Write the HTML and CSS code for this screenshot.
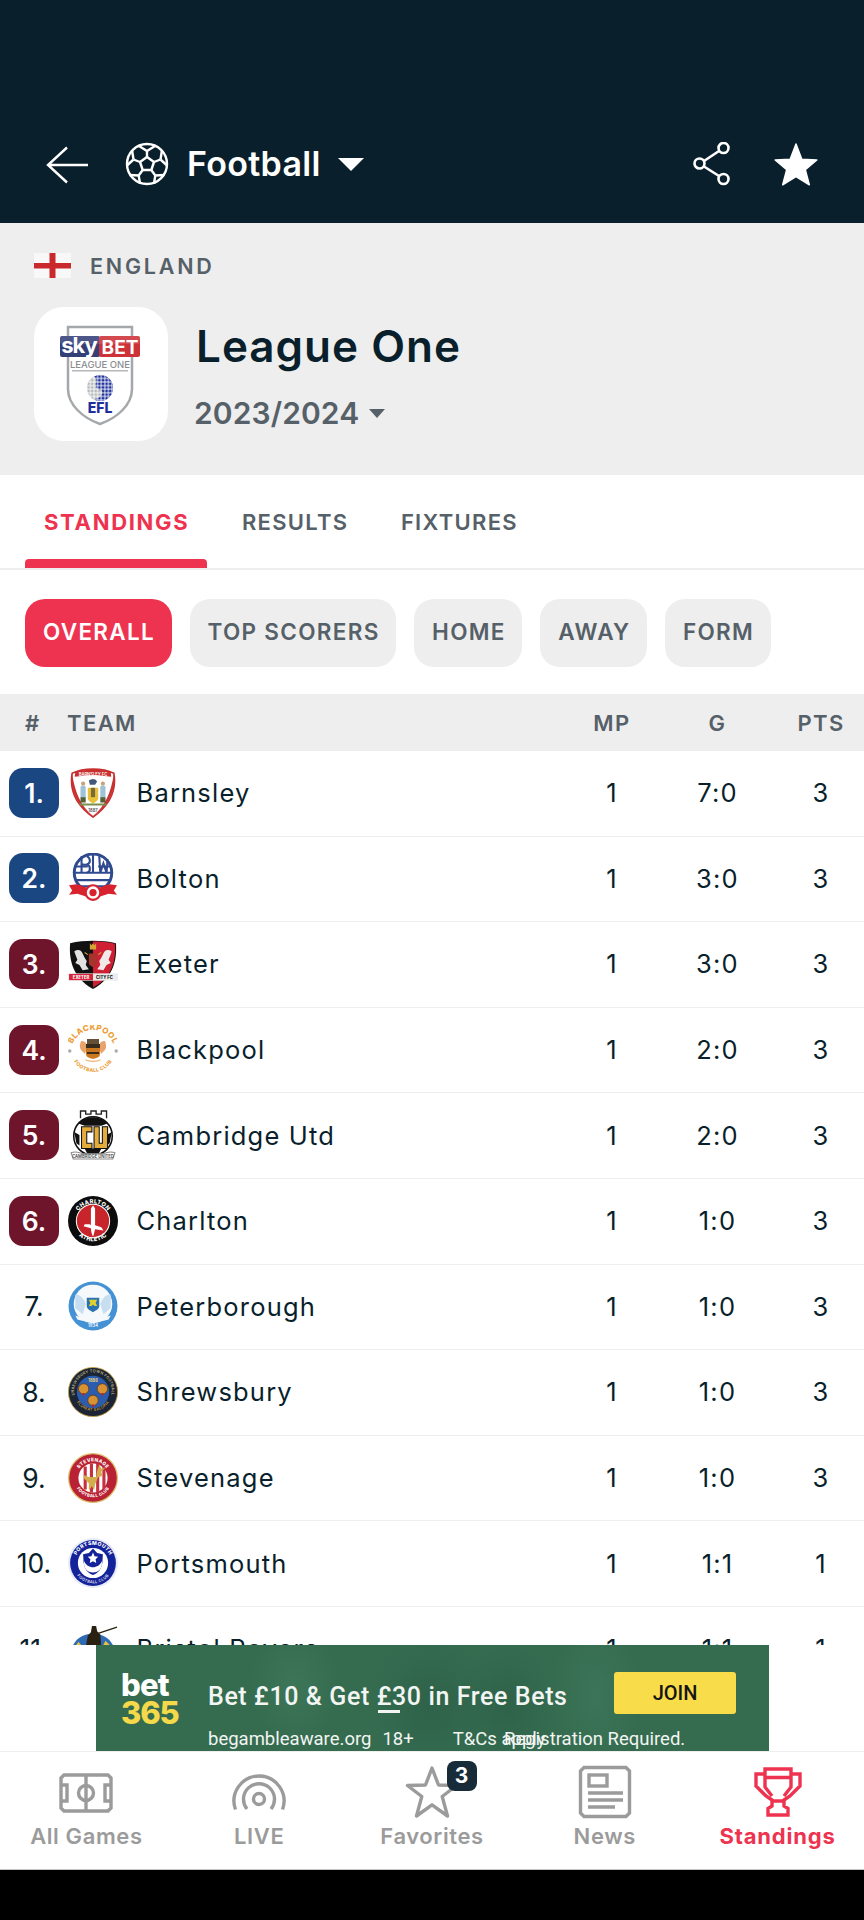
FILE: index.html
```html
<!DOCTYPE html>
<html lang="en">
<head>
<meta charset="utf-8">
<title>League One</title>
<link rel="stylesheet" href="styles.css">
</head>
<body>
<div class="app">
  <header class="topbar">
    <svg class="ico-back" viewBox="0 0 42 38"><path d="M21 1.500 2 19l19 17.500M2 19h40" fill="none" stroke="#fff" stroke-width="2.400"/></svg>
    <svg class="ico-ball" viewBox="0 0 44 44" fill="none" stroke="#fff" stroke-width="2.400" stroke-linejoin="round"><circle cx="22" cy="22" r="20"/><path d="M22 15l7 5-2.700 8h-8.600L15 20z"/><path d="M22 15V9M29 20l6.500-2.500M26.300 28l4 5.500M17.700 28l-4 5.500M15 20l-6.500-2.500"/><path d="M14 4l8 5 8-5M35.500 17.500l1.500-9.500M35.500 17.500l6 5.500M8.500 17.500 7 8M8.500 17.500l-6 5.500M30.300 33.500l9-.5M30.300 33.500 29 41.500M13.700 33.500l-9-.5M13.700 33.500 15 41.500"/></svg>
    <span class="sport">Football</span>
    <span class="caret caret-lg"></span>
    <span class="grow"></span>
    <svg class="ico-share" viewBox="0 0 38 44" fill="none" stroke="#fff" stroke-width="2.600"><circle cx="6.500" cy="21.500" r="5"/><circle cx="30.500" cy="6" r="5"/><circle cx="30.500" cy="37" r="5"/><path d="M11 19 26 9M11 24.500 26 34"/></svg>
    <svg class="ico-star" viewBox="0 0 44 44"><path d="M22 2l5.800 15.200 15 .8-11.500 9.800 4 15L22 34.500 8.700 42.800l4-15L1.200 18l15-.8z" fill="#fff" stroke="#fff" stroke-width="1.500" stroke-linejoin="round"/></svg>
  </header>

  <section class="league">
    <div class="country">
      <svg class="flag" viewBox="0 0 37 25"><rect width="37" height="25" fill="#f8f8f8"/><rect x="15.500" width="6" height="25" fill="#c9282d"/><rect y="10" width="37" height="5.500" fill="#c9282d"/></svg>
      <span>ENGLAND</span>
    </div>
    <div class="league-main">
      <div class="league-logo">
        <svg viewBox="0 0 120 125">
          <defs><pattern id="dots" width="3.600" height="3.600" patternUnits="userSpaceOnUse"><path d="M0 0h3.600v3.600H0z" fill="none" stroke="#fff" stroke-width=".9"/></pattern></defs>
          <path d="M28 17h64v62c0 16-15 29-32 35-17-6-32-19-32-35z" fill="#fff" stroke="#a5a8ab" stroke-width="2.500"/>
          <rect x="20" y="26" width="40" height="21" rx="2" fill="#343f78"/>
          <rect x="59" y="26" width="41" height="21" rx="2" fill="#cc3238"/>
          <rect x="20" y="26" width="80" height="8" rx="2" fill="#fff" opacity=".12"/>
          <text x="39" y="43" class="l-sky">sky</text>
          <text x="80" y="43.500" class="l-bet">BET</text>
          <text x="60" y="58" class="l-one">LEAGUE ONE</text>
          <rect x="32" y="60" width="56" height="1.500" fill="#b5b7b9"/>
          <circle cx="60" cy="78" r="13" fill="#b5b7b9"/>
          <path d="M54 66.500a13 13 0 1 1 0 23c6-1 9-5 8-9-5-1-7-3-6-8 1-2.500 0-4.500-2-6z" fill="#1d2f9b"/>
          <circle cx="60" cy="78" r="13" fill="url(#dots)"/>
          <text x="60" y="103" class="l-efl">EFL</text>
        </svg>
      </div>
      <div class="league-text">
        <h1>League One</h1>
        <div class="season"><span>2023/2024</span><span class="caret caret-sm"></span></div>
      </div>
    </div>
  </section>

  <nav class="tabs">
    <div class="tab tab-on">STANDINGS</div>
    <div class="tab">RESULTS</div>
    <div class="tab">FIXTURES</div>
  </nav>

  <div class="chips">
    <span class="chip chip-on">OVERALL</span>
    <span class="chip">TOP SCORERS</span>
    <span class="chip">HOME</span>
    <span class="chip">AWAY</span>
    <span class="chip">FORM</span>
  </div>

  <div class="thead">
    <span class="th-rank">#</span>
    <span class="th-team">TEAM</span>
    <span class="c-mp">MP</span>
    <span class="c-g">G</span>
    <span class="c-pts">PTS</span>
  </div>

  <main class="tbody">
    <div class="row">
      <span class="rank rank-blue">1.</span>
      <svg class="crest" viewBox="0 0 48 48"><path d="M24 1c7 0 14 1 20 4 2 12 0 28-20 42C4 33 2 17 4 5c6-3 13-4 20-4z" fill="#fff" stroke="#c92f2f" stroke-width="1.600"/><path d="M4 6c3 18 8 30 20 40C9 37 3 22 3 8z" fill="#c92f2f"/><path d="M44 6c-3 18-8 30-20 40 15-9 21-24 21-38z" fill="#c92f2f"/><path d="M7 3.500c11-2.500 23-2.500 34 0l.5 5c-11-2-24-2-35 0z" fill="#c92f2f"/><text x="24" y="7.500" class="t-crest" fill="#fff">BARNSLEY FC</text><path d="M20 12c3-2 6-2 8 1l-2 3h-5z" fill="#46587a"/><path d="M19 19h10v10c0 2-2 3.500-5 5-3-1.500-5-3-5-5z" fill="#e8c23b"/><path d="M22 19h4v9h-4z" fill="#7a6a3a"/><rect x="12" y="17" width="5" height="12" rx="1.500" fill="#9fc2d8"/><rect x="31" y="17" width="5" height="12" rx="1.500" fill="#9fc2d8"/><circle cx="14.500" cy="15" r="2" fill="#c9a27d"/><circle cx="33.500" cy="15" r="2" fill="#c9a27d"/><path d="M12 28h5v5h-5zM31 28h5v5h-5z" fill="#54603a"/><path d="M10 34h28l-2 2H12z" fill="#7b8f4c"/><text x="24" y="42" class="t-crest" fill="#555">1887</text></svg>
      <span class="team">Barnsley</span>
      <span class="c-mp">1</span><span class="c-g">7:0</span><span class="c-pts">3</span>
    </div>
    <div class="row">
      <span class="rank rank-blue">2.</span>
      <svg class="crest" viewBox="0 0 48 48"><circle cx="24" cy="19" r="18" fill="none" stroke="#2f4a8f" stroke-width="2.800"/><path d="M6 19h36M8 26h32M12 32h24" stroke="#2f4a8f" stroke-width="2" fill="none"/><path d="M7 13h12M29 13h12" stroke="#2f4a8f" stroke-width="1.800"/><path d="M13 3v16M18 3c4 2 4 7 0 8-4 1-5-1-5 0M18 11c4 1 4 7 0 8M24 1v18M30 3l1 16 3-9 3 9 1-13" stroke="#2f4a8f" stroke-width="2" fill="none"/><path d="M1 31l7-1c6 1 12 5 16 6 4-1 10-5 16-6l7 1-3 5 3 4-8-1-15 5-15-5-8 1 3-4z" fill="#d8232f"/><circle cx="24" cy="38" r="7" fill="#fff" stroke="#d8232f" stroke-width="2"/><circle cx="24" cy="38" r="3.500" fill="#d8232f"/></svg>
      <span class="team">Bolton</span>
      <span class="c-mp">1</span><span class="c-g">3:0</span><span class="c-pts">3</span>
    </div>
    <div class="row">
      <span class="rank rank-red">3.</span>
      <svg class="crest" viewBox="0 0 48 48"><path d="M2 4c14-3 30-3 44 0 1 14-1 32-22 44C3 36 1 18 2 4z" fill="#111"/><path d="M24 2.500c7 0 14 .5 21 2 1 14-1 31-21 42z" fill="#cf1f35"/><path d="M6 12c4-3 7-1 8 2l2 4 2 3-1 4 3 4-6 1-3-5-4-2 2-3z" fill="#e2e2e2"/><path d="M42 12c-4-3-7-1-8 2l-2 4-2 3 1 4-3 4 6 1 3-5 4-2-2-3z" fill="#f2e8e8"/><path d="M20 14h8v9c0 2-2 3-4 4-2-1-4-2-4-4z" fill="#a8332c"/><path d="M21 4l1.500 2L24 4l1.500 2L27 4v6h-6z" fill="#d4a530"/><path d="M16 13l3 2M32 13l-3 2" stroke="#d4a530"/><rect x="0" y="33" width="48" height="7" fill="#ececec"/><rect x="1" y="33.500" width="23" height="6" fill="#d72339"/><text x="12.500" y="38.500" class="t-crest t-bold" fill="#fff">EXETER</text><text x="35" y="38.500" class="t-crest t-bold" fill="#111">CITY FC</text></svg>
      <span class="team">Exeter</span>
      <span class="c-mp">1</span><span class="c-g">3:0</span><span class="c-pts">3</span>
    </div>
    <div class="row">
      <span class="rank rank-red">4.</span>
      <svg class="crest" viewBox="0 0 50 48"><defs><path id="bp-top" d="M3 26a22 22 0 0 1 44 0"/><path id="bp-bot" d="M3 24a22 22 0 0 0 44 0"/></defs><text class="t-ring t-bold" fill="#eda03a" font-size="8"><textPath href="#bp-top" startOffset="50%">BLACKPOOL</textPath></text><text class="t-ring t-bold" fill="#eda03a" font-size="5"><textPath href="#bp-bot" startOffset="50%">FOOTBALL CLUB</textPath></text><circle cx="1.800" cy="25" r="1.700" fill="#a9a9a9"/><circle cx="48.200" cy="25" r="1.700" fill="#a9a9a9"/><path d="M13 15c4 0 6 2 6 6l-2 7-4-4c-2-3-1-6 0-9zM37 15c-4 0-6 2-6 6l2 7 4-4c2-3 1-6 0-9z" fill="#e8a46a"/><path d="M19 13h12v5H19z" fill="#64513a"/><path d="M18 18h14v10c0 3-3 4-7 5-4-1-7-2-7-5z" fill="#c9781f"/><path d="M18 18h14v4H18zM19 26h12v2H19z" fill="#3a2c1c"/><path d="M17 33c5 2 11 2 16 0l-1 2c-5 1.500-9 1.500-14 0z" fill="#efc08a"/></svg>
      <span class="team">Blackpool</span>
      <span class="c-mp">1</span><span class="c-g">2:0</span><span class="c-pts">3</span>
    </div>
    <div class="row">
      <span class="rank rank-red">5.</span>
      <svg class="crest" viewBox="0 0 48 48"><path d="M12 8V1h5v3h5V1h5v3h5V1h5v7" fill="#fff" stroke="#222" stroke-width="1.300"/><circle cx="24" cy="25" r="18.500" fill="#fff" stroke="#111" stroke-width="1.500"/><path d="M24 7c6 0 11 2 14 6l-6 2H16l-6-2c3-4 8-6 14-6zM6 21l5 3 0 10-3-2zM42 21l-5 3 0 10 3-2zM16 37h16l-3 6H19z" fill="#111"/><path d="M13 16h10v5h-5v11h5v5H13z" fill="#e4ac3b" stroke="#111"/><path d="M25 16h5v16h3V16h5v21H25z" fill="#e4ac3b" stroke="#111"/><path d="M3 41c6-2 8 1 13 1h16c5 0 7-3 13-1l-2 6H5z" fill="#fff" stroke="#8a8a8a"/><text x="24" y="46" class="t-crest" fill="#444" font-size="3">CAMBRIDGE UNITED</text></svg>
      <span class="team">Cambridge Utd</span>
      <span class="c-mp">1</span><span class="c-g">2:0</span><span class="c-pts">3</span>
    </div>
    <div class="row">
      <span class="rank rank-red">6.</span>
      <svg class="crest" viewBox="0 0 48 48"><defs><path id="ch-top" d="M7 24a17 17 0 0 1 34 0"/><path id="ch-bot" d="M4.500 24a19.500 19.500 0 0 0 39 0"/></defs><circle cx="24" cy="24" r="24" fill="#0c0c0c"/><circle cx="24" cy="24" r="16" fill="#c8242b" stroke="#fff" stroke-width="1"/><text class="t-ring t-bold" fill="#fff" font-size="5.500"><textPath href="#ch-top" startOffset="50%">CHARLTON</textPath></text><text class="t-ring t-bold" fill="#fff" font-size="5.500"><textPath href="#ch-bot" startOffset="50%">ATHLETIC</textPath></text><path d="M24 9l2 3 0 16 6 2 2 3-8-1c-1 3-1 5-2 7-1-2-2-5-2-8l-7-2 1-2h5l1 1V12z" fill="#fff"/></svg>
      <span class="team">Charlton</span>
      <span class="c-mp">1</span><span class="c-g">1:0</span><span class="c-pts">3</span>
    </div>
    <div class="row">
      <span class="rank">7.</span>
      <svg class="crest" viewBox="0 0 48 48"><circle cx="24" cy="24" r="23.500" fill="#4492d3"/><circle cx="24" cy="22" r="18.500" fill="#f5f9fc"/><path d="M7 13c4 0 8 3 10 9l-3 10-7-6zM41 13c-4 0-8 3-10 9l3 10 7-6z" fill="#c6deef"/><path d="M18 16h12v8c0 3-3 4-6 6-3-2-6-3-6-6z" fill="#2b74b3"/><path d="M20 18h8l-1.500 3 1.500 3h-2.500l-1.500-1.500-1.500 1.500H20l1.500-3z" fill="#e3d02f"/><path d="M7 33c10 4 24 4 34 0l-2 4c-9 3-21 3-30 0z" fill="#f5f9fc"/><text x="24" y="44.500" class="t-crest" fill="#fff">1934</text></svg>
      <span class="team">Peterborough</span>
      <span class="c-mp">1</span><span class="c-g">1:0</span><span class="c-pts">3</span>
    </div>
    <div class="row">
      <span class="rank">8.</span>
      <svg class="crest" viewBox="0 0 48 48"><defs><path id="sh-top" d="M9 33A18 18 0 1 1 39 33"/><path id="sh-bot" d="M7 31a18.500 18.500 0 0 0 34 0"/></defs><circle cx="24" cy="24" r="23.600" fill="#1b2535" stroke="#c9a13e" stroke-width=".8"/><circle cx="24" cy="24" r="15.500" fill="#2a5db0"/><text class="t-ring" fill="#d8c78d" font-size="3.600"><textPath href="#sh-top" startOffset="50%">SHREWSBURY TOWN FOOTBALL</textPath></text><text class="t-ring" fill="#d8a63a" font-size="3.600"><textPath href="#sh-bot" startOffset="50%">FLOREAT SALOPIA</textPath></text><g fill="#d69233" stroke="#6d3a12" stroke-width=".8"><circle cx="15" cy="21" r="5"/><circle cx="33" cy="21" r="5"/><circle cx="24" cy="32" r="5"/></g><path d="M14 25l1 4 1-4zM32 25l1 4 1-4zM23 36l1 4 1-4z" fill="#c5222a"/><text x="24" y="14" class="t-crest" fill="#f3d779">1886</text></svg>
      <span class="team">Shrewsbury</span>
      <span class="c-mp">1</span><span class="c-g">1:0</span><span class="c-pts">3</span>
    </div>
    <div class="row">
      <span class="rank">9.</span>
      <svg class="crest" viewBox="0 0 48 48"><defs><path id="st-top" d="M8 24a16 16 0 0 1 32 0"/><path id="st-bot" d="M5.500 24a18.500 18.500 0 0 0 37 0"/></defs><circle cx="24" cy="24" r="23.400" fill="#b92234" stroke="#dcc06a" stroke-width="1.200"/><circle cx="24" cy="24" r="14" fill="#fff"/><path d="M15 13h3v22h-3zM21 10h3v28h-3zM27 10h3v28h-3zM33 13h3v22h-3z" fill="#c6303f"/><text class="t-ring t-bold" fill="#fff" font-size="4.600"><textPath href="#st-top" startOffset="50%">STEVENAGE</textPath></text><text class="t-ring t-bold" fill="#fff" font-size="4"><textPath href="#st-bot" startOffset="50%">FOOTBALL CLUB</textPath></text><path d="M30 11l2 4 4-1-4 4 1 4-4 1-3 7-1 6-2-4-3 4 0-7-5-5 0-3 5 2h7l1-6z" fill="#d3ac4e"/></svg>
      <span class="team">Stevenage</span>
      <span class="c-mp">1</span><span class="c-g">1:0</span><span class="c-pts">3</span>
    </div>
    <div class="row">
      <span class="rank">10.</span>
      <svg class="crest" viewBox="0 0 48 48"><defs><path id="po-top" d="M6.500 24a17.500 17.500 0 0 1 35 0"/><path id="po-bot" d="M4.500 24a19.500 19.500 0 0 0 39 0"/></defs><circle cx="24" cy="24" r="24" fill="#e8ecf8"/><circle cx="24" cy="24" r="22" fill="#15239a"/><circle cx="24" cy="24" r="14.500" fill="#fff"/><text class="t-ring t-bold" fill="#fff" font-size="5"><textPath href="#po-top" startOffset="50%">PORTSMOUTH</textPath></text><text class="t-ring" fill="#fff" font-size="3.800"><textPath href="#po-bot" startOffset="50%">FOOTBALL CLUB</textPath></text><path d="M24 10l4 4.500 5.500 1-.5 8c-1 7-4 10-9 12-5-2-8-5-9-12l-.5-8 5.500-1z" fill="#15239a"/><path d="M15.500 22c3 8 14 8 17 0 1 7-3 11-8.500 11s-9.500-4-8.500-11z" fill="#fff"/><path d="M24 14l1.500 3.500 3.500.5-2.500 2.500.6 3.500-3.100-1.700-3.100 1.700.6-3.500L19 18l3.500-.5z" fill="#fff"/></svg>
      <span class="team">Portsmouth</span>
      <span class="c-mp">1</span><span class="c-g">1:1</span><span class="c-pts">1</span>
    </div>
    <div class="row">
      <span class="rank">11.</span>
      <svg class="crest" viewBox="0 0 48 48"><path d="M4 22C8 13 14 10 24 9c10 1 16 4 20 13v26H4z" fill="#2f6ab5"/><path d="M6 23l4-6 5 6-3 5zM36 16l6 6-3 5-6-5z" fill="#e6c23d"/><path d="M17 22l2-11 3-3 1-6h4l1 5 3 3 1 12z" fill="#2a2113"/><path d="M29 9 47 3" stroke="#2a2113" stroke-width="1.300"/></svg>
      <span class="team">Bristol Rovers</span>
      <span class="c-mp">1</span><span class="c-g">1:1</span><span class="c-pts">1</span>
    </div>
  </main>

  <aside class="ad-band">
    <div class="ad">
      <div class="ad-logo"><span class="ad-bet">bet</span><span class="ad-365">365</span></div>
      <div class="ad-copy">
        <div class="ad-head">Bet £10 &amp; Get <span class="ad-under">£30</span> in Free Bets</div>
        <div class="ad-foot"><span>begambleaware.org</span><span>18+</span><span class="ad-tc">T&amp;Cs apply</span><span class="ad-reg">Registration Required.</span></div>
      </div>
      <div class="ad-join">JOIN</div>
    </div>
  </aside>

  <footer class="bottomnav">
    <div class="nav-item">
      <svg class="nav-ico" viewBox="0 0 60 54" fill="none" stroke="#9b9b9b" stroke-width="3.400"><path d="M8 10h44l3 3v30l-3 3H8l-3-3V13z"/><path d="M30 10v36"/><circle cx="30" cy="28" r="7.500"/><path d="M5 20h6v16H5M55 20h-6v16h6"/></svg>
      <span>All Games</span>
    </div>
    <div class="nav-item">
      <svg class="nav-ico" viewBox="0 0 60 54" fill="none" stroke="#9b9b9b" stroke-width="3.400"><path d="M6.500 44.500A25 25 0 1 1 53.500 44.500M18 44a15.500 15.500 0 1 1 24 0"/><circle cx="30" cy="34" r="5.500"/></svg>
      <span>LIVE</span>
    </div>
    <div class="nav-item nav-fav">
      <svg class="nav-ico" viewBox="0 0 60 54" fill="none" stroke="#9b9b9b" stroke-width="3.400" stroke-linejoin="round"><path d="M30 3l6.500 17 18 .5-14.300 11 5.300 19.500L30 39.800 14.500 51l5.300-19.500-14.300-11 18-.5z"/></svg>
      <span class="nav-badge">3</span>
      <span>Favorites</span>
    </div>
    <div class="nav-item">
      <svg class="nav-ico" viewBox="0 0 60 54" fill="none" stroke="#9b9b9b" stroke-width="3.400"><path d="M9 2.500h42l3.500 3.500v42l-3.500 3.500H9L5.500 48V6z"/><rect x="14" y="10" width="18" height="11"/><path d="M13 28h35M13 35h35M13 42h27"/></svg>
      <span>News</span>
    </div>
    <div class="nav-item nav-on">
      <svg class="nav-ico" viewBox="0 0 60 54" fill="none" stroke="#ee3350" stroke-width="3.400"><path d="M17 4h26v5h9v12L42 31l-6 4v6l4 2.500V50H20v-6.500l4-2.500v-6l-6-4L8 21V9h9zM17 9v13l7 9M43 9v13l-7 9M17 12.500h26M24 36h12"/></svg>
      <span>Standings</span>
    </div>
  </footer>
  <div class="sysbar"></div>
</div>
</body>
</html>
```

FILE: styles.css
```css
* { box-sizing: border-box; }
html, body { margin: 0; padding: 0; background: #000; }
body { font-family: "Inter", "Liberation Sans", sans-serif; }
.app { width: 864px; height: 1920px; display: flex; flex-direction: column; overflow: hidden; background: #fff; }

/* top bar */
.topbar { flex: 0 0 223px; background: #0a1f2c; display: flex; align-items: flex-end; padding: 0 46px 37px 46px; color: #fff; }
.ico-back { width: 42px; height: 38px; margin-bottom: 2px; }
.ico-ball { width: 44px; height: 44px; margin-left: 37px; }
.sport { font-size: 34px; font-weight: 600; line-height: 44px; margin-left: 18px; letter-spacing: .3px; }
.caret { display: inline-block; width: 0; height: 0; border-style: solid; border-color: transparent; }
.caret-lg { border-width: 13px 13px 0 13px; border-top-color: #fff; margin: 0 0 15px 17px; }
.caret-sm { border-width: 9px 8.500px 0 8.500px; border-top-color: #566068; margin-left: 10px; }
.grow { flex: 1; }
.ico-share { width: 38px; height: 44px; }
.ico-star { width: 44px; height: 44px; margin: 0 0 0 43px; }

/* league header */
.league { flex: 0 0 252px; background: #eee; padding: 30px 34px 0; }
.country { display: flex; align-items: center; height: 25px; color: #566068; font-size: 21.500px; font-weight: 600; letter-spacing: 2.800px; }
.flag { width: 37px; height: 25px; margin-right: 19px; }
.league-main { display: flex; margin-top: 29px; }
.league-logo { width: 134px; height: 134px; border-radius: 30px; background: #fff; padding: 3px 6px; }
.league-logo svg { width: 120px; height: 125px; display: block; }
.l-sky { font: 700 22px "Inter", sans-serif; fill: #fff; text-anchor: middle; letter-spacing: -1px; }
.l-bet { font: 700 19px "Inter", sans-serif; fill: #fff; text-anchor: middle; }
.l-one { font: 500 9.500px "Inter", sans-serif; fill: #8b8d90; text-anchor: middle; }
.l-efl { font: 800 14px "Inter", sans-serif; fill: #1d2f9b; text-anchor: middle; }
.league-text { margin-left: 28px; display: flex; flex-direction: column; }
h1 { margin: 12px 0 0; font-size: 44px; line-height: 54px; font-weight: 600; color: #0a1f2c; letter-spacing: 1px; }
.season { display: flex; align-items: center; margin-top: 20px; margin-left: -2px; font-size: 30px; line-height: 40px; font-weight: 600; color: #566068; letter-spacing: .1px; }

/* tabs */
.tabs { flex: 0 0 95px; display: flex; padding: 0 0 0 25px; border-bottom: 2px solid #eee; }
.tab { font-size: 22px; font-weight: 600; letter-spacing: 1.300px; color: #566068; padding: 34px 17.500px 0 19px; margin-right: 16px; }
.tab-on { color: #ee3350; font-weight: 700; letter-spacing: 1.700px; position: relative; }
.tab-on::after { content: ""; position: absolute; left: 0; right: 0; bottom: 0; height: 9px; border-radius: 4px 4px 0 0; background: #ee3350; }

/* chips */
.chips { flex: 0 0 124px; display: flex; gap: 18px; padding: 29px 25px 0; align-items: flex-start; }
.chip { height: 68px; line-height: 66px; padding: 0 16.500px 0 18px; border-radius: 20px; background: #eee; color: #566068; font-size: 22.500px; font-weight: 600; letter-spacing: 1.300px; }
.chip-on { background: #ee3350; color: #fff; }

/* table */
.thead { flex: 0 0 57px; display: flex; align-items: center; background: #eee; color: #566068; font-size: 22px; font-weight: 600; letter-spacing: 1.400px; }
.th-rank { width: 67px; padding-left: 25px; }
.th-team { flex: 1; }
.c-mp { width: 106px; margin-left: 3px; text-align: center; }
.c-g { width: 105px; text-align: center; }
.c-pts { width: 86px; margin-left: 8px; text-align: center; }

.tbody { flex: 0 0 894px; overflow: hidden; }
.row { height: 85.600px; display: flex; align-items: center; border-bottom: 1.500px solid #eee; padding-bottom: 1px; color: #0a1f2c; font-size: 25.500px; letter-spacing: 1.200px; }
.rank { width: 50px; height: 50px; margin-left: 9px; border-radius: 14px; display: flex; align-items: center; justify-content: center; font-size: 26.500px; letter-spacing: 0; }
.rank-blue, .rank-red { color: #fff; font-weight: 600; }
.rank-blue { background: #1a4682; }
.rank-red { background: #6e142b; }
.crest { width: 50px; height: 50px; margin-left: 9px; flex: none; }
.team { flex: 1; margin-left: 18.500px; }
.t-crest { font: 600 4px "Inter", sans-serif; text-anchor: middle; letter-spacing: 0; }
.t-ring { font-family: "Inter", sans-serif; text-anchor: middle; letter-spacing: .3px; font-weight: 500; }
.t-bold { font-weight: 800; }

/* ad */
.ad-band { flex: 0 0 106px; background: #fff; padding: 0 95px 0 96px; }
.ad { height: 106px; overflow: hidden; display: flex; color: #f2f5f2;
  background:
    radial-gradient(ellipse 45px 60px at 198px 40px, #3d7559 0, transparent 100%),
    radial-gradient(ellipse 60px 70px at 335px 60px, #2e6249 0, transparent 100%),
    radial-gradient(ellipse 50px 60px at 410px 60px, #2e6249 0, transparent 100%),
    radial-gradient(ellipse 45px 80px at 500px 50px, #3b7458 0, transparent 100%),
    #356c50;
  font-family: "Roboto", "Liberation Sans", sans-serif; }
.ad-logo { width: 112px; padding: 26px 0 0 25px; display: flex; flex-direction: column; font-family: "Inter", sans-serif; font-weight: 800; font-size: 31px; line-height: 28px; }
.ad-bet { color: #fff; letter-spacing: -.8px; }
.ad-365 { color: #f5d94a; letter-spacing: -1.200px; }
.ad-copy { width: 406px; display: flex; flex-direction: column; }
.ad-head { font-size: 25px; font-weight: 500; line-height: 30px; margin-top: 37px; white-space: nowrap; letter-spacing: .6px; }
.ad-under { position: relative; }
.ad-under::after { content: ""; position: absolute; left: 1px; right: 22px; bottom: -2px; height: 3px; background: #f2f5f2; }
.ad-foot { display: flex; font-size: 18.500px; line-height: 22px; margin-top: 16px; white-space: nowrap; position: relative; }
.ad-foot span:nth-child(2) { margin-left: 11px; }
.ad-tc { margin-left: 39px; }
.ad-reg { position: absolute; left: 296px; top: 0; }
.ad-join { width: 122px; height: 42px; margin-top: 27px; background: #f9dc4a; border-radius: 3px; color: #151515; font-size: 20px; font-weight: 500; text-align: center; line-height: 42px; }

/* bottom nav */
.bottomnav { flex: 0 0 119px; display: flex; border-top: 1.500px solid #eee; border-bottom: 1.500px solid #c4c4c4; background: #fff; color: #9b9b9b; }
.nav-item { flex: 1; display: flex; flex-direction: column; align-items: center; padding-top: 13px; font-size: 22px; font-weight: 600; letter-spacing: .6px; position: relative; }
.nav-ico { width: 60px; height: 54px; margin-bottom: 4px; }
.nav-on { color: #ee3350; font-weight: 700; letter-spacing: .8px; }
.nav-badge { position: absolute; left: 101px; top: 9px; width: 30px; height: 30px; border-radius: 8px; background: #172b39; color: #fff; font-size: 21px; font-weight: 700; line-height: 30px; text-align: center; letter-spacing: 0; }
.sysbar { flex: 1; background: #000; }
```
